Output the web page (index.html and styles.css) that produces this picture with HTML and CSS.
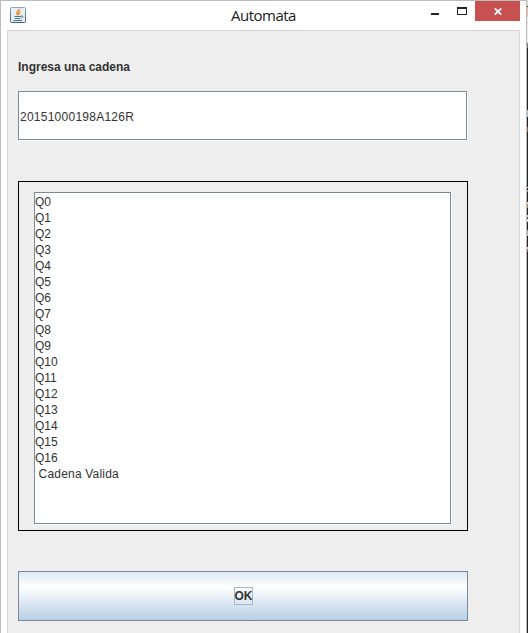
FILE: index.html
```html
<!DOCTYPE html>
<html lang="es">
<head>
<meta charset="utf-8">
<title>Automata</title>
<link rel="stylesheet" href="styles.css">
</head>
<body>
<div class="desktop">
<main class="window">
  <header class="titlebar">
    <svg class="java" width="16" height="16" viewBox="0 0 16 16">
      <defs><linearGradient id="g" x1="0" y1="0" x2="0" y2="1"><stop offset="0" stop-color="#8ba6ba"/><stop offset="1" stop-color="#3f607a"/></linearGradient></defs>
      <rect x=".5" y=".5" width="15" height="15" rx="1" fill="#e9eef2" stroke="url(#g)"/>
      <path d="M9.300 2C9.500 4 6.300 4.500 6.700 6.500L8 8M10.500 4.800C8 5.500 9.500 6.500 8.500 8" fill="none" stroke="#e8801f" stroke-width="1.400"/>
      <path d="M4.500 9.500H11M5 11.500H10M3.500 13.500H12M11 9C13.800 8.500 13.500 10.500 11 11.200" fill="none" stroke="#4b748f" stroke-width="1"/>
    </svg>
    <h1 class="title">Automata</h1>
    <div class="controls">
      <svg class="glyph" width="65" height="20" viewBox="0 0 65 20" shape-rendering="crispEdges">
        <rect x="21" y="12" width="8" height="2" fill="#222"/>
        <path d="M47 6h10v8H47zM48 8v5h8V8z" fill="#222" fill-rule="evenodd"/>
      </svg>
      <div class="close"><svg width="8" height="7" viewBox="0 0 8 7"><path d="M.8.3L7.200 6.700M7.200.3L.8 6.700" stroke="#fff" stroke-width="1.700"/></svg></div>
    </div>
  </header>
  <section class="content">
    <label class="label"><svg width="113" height="16"><text x="0" y="12" textLength="112">Ingresa una cadena</text></svg></label>
    <div class="field"><span>20151000198A126R</span></div>
    <div class="panel"><pre class="output">Q0
Q1
Q2
Q3
Q4
Q5
Q6
Q7
Q8
Q9
Q10
Q11
Q12
Q13
Q14
Q15
Q16
<span class="result"> Cadena Valida</span></pre></div>
    <div class="ok"><span>OK</span></div>
  </section>
</main>
<aside class="behind"></aside>
</div>
</body>
</html>
```
FILE: styles.css
```css
* { box-sizing: border-box; }
body { margin: 0; overflow: hidden; background: #fff; color: #333; font: 12px/16px "Liberation Sans", Arial, sans-serif; }
.desktop { display: flex; width: 528px; height: 633px; }
.window { width: 527px; height: 633px; border: 1px solid #bcbcbc; border-bottom: 0; padding: 0 6px; background: #fff; display: flex; flex-direction: column; }
.titlebar { height: 29px; display: grid; grid-template-columns: 223px 1fr 110px; align-items: start; }
.java { margin: 6px 0 0 3px; }
.title { margin: 4px 0 0 1px; font: 15px/20px "Open Sans", sans-serif; letter-spacing: -.5px; color: #222; }
.controls { display: flex; }
.close { width: 45px; height: 20px; background: #c75050; display: flex; align-items: center; justify-content: center; flex: none; padding-top: 1px; }
.content { flex: 1; width: 513px; border: 1px solid #d6d6d6; border-bottom: 0; background: #eee; padding: 28px 0 0 10px; }
.label { display: block; height: 32px; font-weight: bold; }
.label svg { display: block; fill: #333; }
.field { width: 449px; height: 49px; border: 1px solid #7a8a99; background: #fff; box-shadow: 1px 1px #fff; padding: 17px 0 0 1px; letter-spacing: .25px; }
.panel { margin-top: 41px; width: 450px; height: 350px; border: 1px solid #000; padding: 10px 15px; }
.output { margin: 0; width: 417px; height: 332px; border: 1px solid #7a8a99; box-shadow: 1px 1px #fff; background: #fff; padding: 1px 0 0; font: inherit; }
.result { letter-spacing: .2px; }
.ok { margin-top: 40px; width: 450px; height: 50px; border: 1px solid #7a8a99; background: linear-gradient(#dde8f3, #fff 30%, #b8cfe5); display: flex; align-items: center; justify-content: center; font-weight: bold; }
.ok span { border: 1px solid #a3b8cc; height: 18px; width: 19px; text-align: center; }
.behind { width: 1px; background: linear-gradient(#ddd 0 6px, #222 6px 7px, #edbf8e 7px 17px, #eee 17px 22px, #ccc 22px 23px, #eee 23px 43px, #777 43px 48px, #222 48px 110px, #9cc6dc 110px 117px, #222 117px 127px, #a65a40 127px 132px, #222 132px 187px, #ddd 187px 188px, #222 188px 190px, #c98d6a 190px 192px, #222 192px 202px, #ddd 202px 204px, #b08355 204px 208px, #222 208px 215px, #ddd 215px 217px, #7a3525 217px 219px, #ddd 219px 222px, #222 222px 230px, #82aecb 230px 233px, #ddb58d 233px 236px, #222 236px 247px, #ddd 247px 249px, #a65a40 249px 252px, #222 252px); }
```
